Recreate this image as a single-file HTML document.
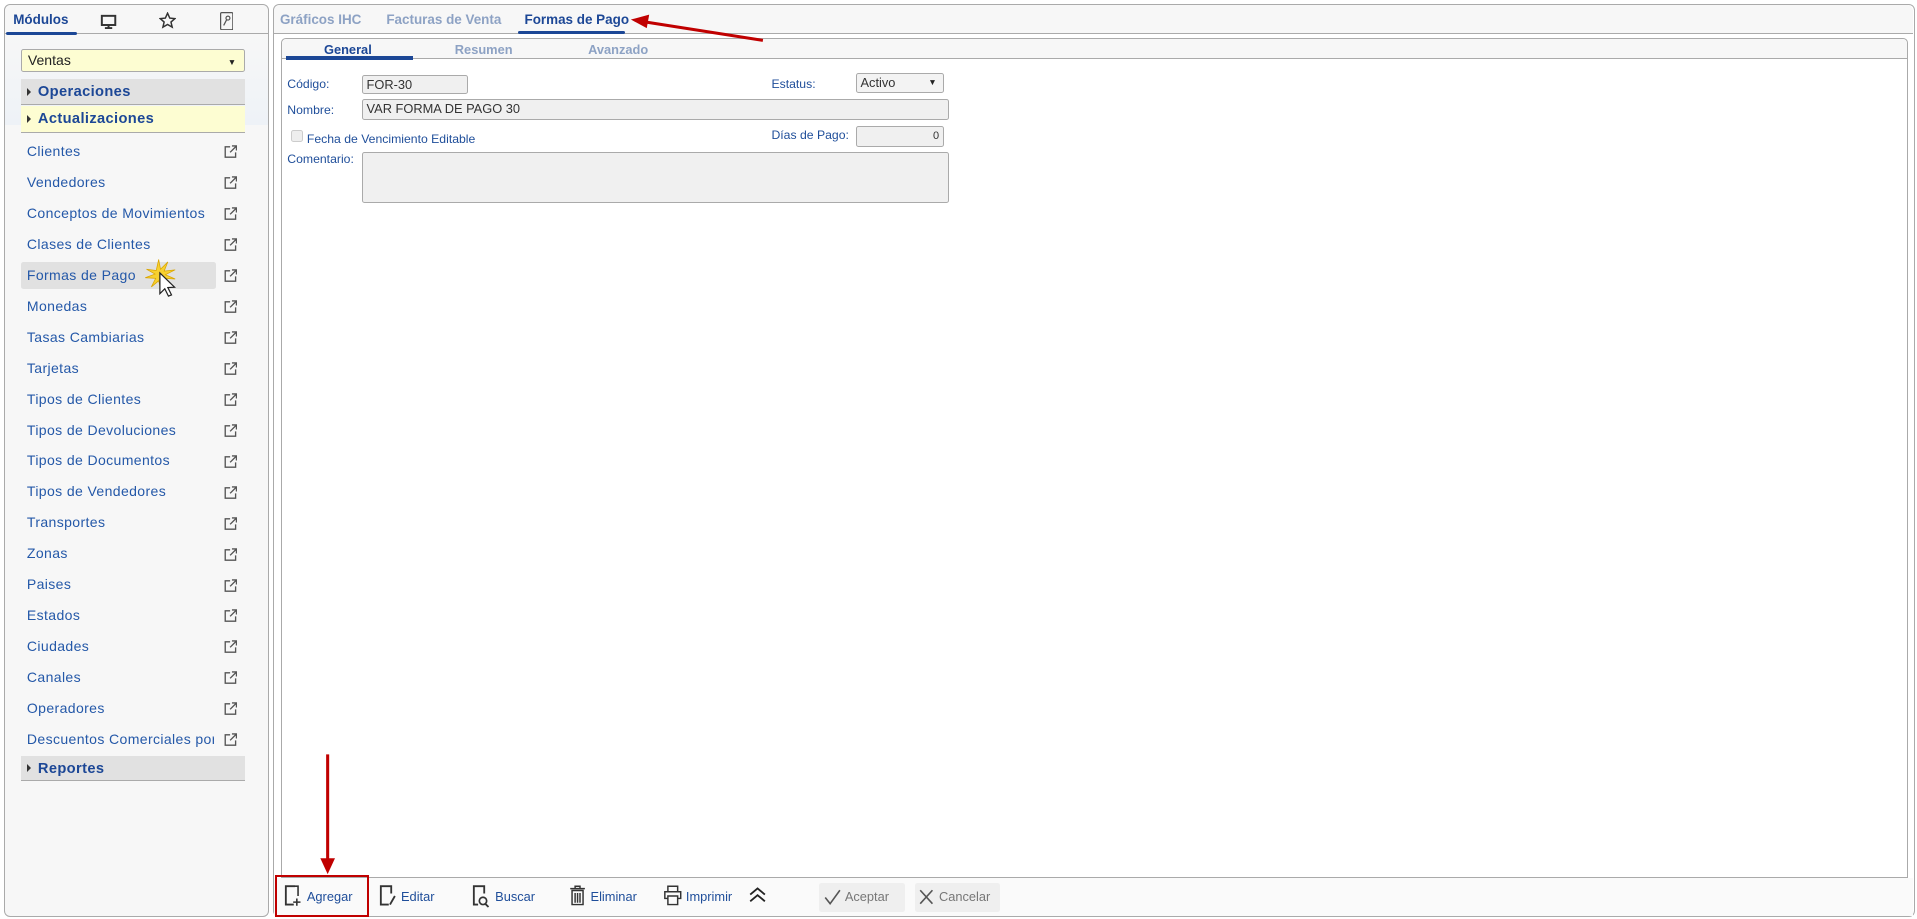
<!DOCTYPE html>
<html><head><meta charset="utf-8">
<style>
*{box-sizing:border-box;margin:0;padding:0}
html,body{width:1917px;height:919px;overflow:hidden;background:#fff}
#w{zoom:1.2226;width:1568px;height:752px;position:relative;font-family:"Liberation Sans",Arial,sans-serif;font-size:11px;color:#1f4e9a}
.a{position:absolute}
.lp{left:3px;top:3px;width:217px;height:747px;border:1px solid #aaa;border-radius:5px;background:#f7f7f7}
.rp{left:223px;top:3px;width:1343px;height:747px;border:1px solid #aaa;border-radius:5px;background:#fff}
.item{position:absolute;left:17px;width:160px;height:22px;line-height:22px;padding-left:5px;font-size:11.5px;letter-spacing:.3px;color:#2458a8}
.ext{position:absolute;left:183px;width:11px;height:11px}
.bar{position:absolute;left:17px;width:183px;height:21px;line-height:22px;font-weight:bold;font-size:12px;color:#1c4796;padding-left:14px;letter-spacing:.3px;border-bottom:1px solid #aaa}
.bar:before{content:"";position:absolute;left:5px;top:7px;border-left:4px solid #333;border-top:3.5px solid transparent;border-bottom:3.5px solid transparent}
.lbl{position:absolute;font-size:10px;color:#1f4e9a}
.inp{position:absolute;background:#f0f0f0;border:1px solid #aaa;border-radius:2px;font-size:10.5px;color:#333;padding-left:3px;line-height:14px}
.tb{position:absolute;top:727px;font-size:10.5px;color:#1f4e9a}
</style></head><body><div id="w">
<div class="a lp">
 <div class="a" style="left:0;top:0;width:215px;height:24px;border-bottom:1px solid #aaa;background:#f7f7f7;border-radius:5px 5px 0 0"></div>
 <div class="a" style="left:7px;top:6px;font-weight:bold;font-size:11px;color:#1c4796">Módulos</div>
 <div class="a" style="left:1px;top:22px;width:58px;height:3px;background:#1c4796;border-radius:2px"></div>
 <svg class="a" style="left:78px;top:8px" width="14" height="13" viewBox="0 0 14 13"><rect x="1.5" y="1.5" width="11" height="7.5" fill="none" stroke="#333" stroke-width="1.6"/><path d="M7 9v2M4 11.5h6" stroke="#333" stroke-width="1.6"/></svg>
 <svg class="a" style="left:126px;top:6px" width="14" height="14" viewBox="0 0 14 14"><path d="M7 1l1.8 4 4.2.4-3.2 2.8 1 4.2L7 10.2 3.2 12.4l1-4.2L1 5.4l4.2-.4z" fill="none" stroke="#333" stroke-width="1.2"/></svg>
 <svg class="a" style="left:176px;top:6px" width="11" height="15" viewBox="0 0 11 15"><rect x=".5" y=".5" width="10" height="14" rx="1" fill="none" stroke="#555"/><circle cx="6.5" cy="5" r="1.6" fill="none" stroke="#555"/><path d="M5.5 6.2L3 11" stroke="#555"/></svg>
</div>
<div class="a" style="left:4px;top:29px;width:215px;height:73px;background:linear-gradient(#f7f7f7,#eef2f7)"></div>
<div class="a" style="left:17px;top:40px;width:183px;height:19px;background:#fdfdd2;border:1px solid #aaa;border-radius:2px;font-size:11.5px;color:#222;line-height:17px;padding-left:5px">Ventas<span style="position:absolute;right:6px;top:2px;font-size:7px">▼</span></div>
<div class="bar" style="top:65px;background:#e1e1e1">Operaciones</div>
<div class="bar" style="top:87px;background:#fdfdd2;height:22px">Actualizaciones</div>
<div class="a" style="left:17px;top:214px;width:160px;height:22px;background:#e1e1e1;border-radius:2px"></div>
<div id="items"></div>
<div class="bar" style="top:618px;background:#e1e1e1;border-bottom:1px solid #aaa">Reportes</div>
<svg class="a" style="left:118px;top:210px" width="34" height="36" viewBox="0 0 34 36"><path d="M12 2l1.5 8 6-6-3 7.5 9-1-8 4 8 3.5-8.5-.5 4 7-6-5-1 8-2-8-6 5 3.5-7L1 17l8-3-7-4 8 1z" fill="#f7d030" stroke="#d9a400" stroke-width=".6"/><path d="M13 13v17l4-4 3 6 2.5-1-3-6 5.5-.3z" fill="#fff" stroke="#222" stroke-width="1"/></svg>

<div class="a rp">
 <div class="a" style="left:0;top:0;width:1341px;height:24px;background:#f7f7f7;border-bottom:1px solid #aaa;border-radius:5px 5px 0 0"></div>
</div>
<div class="a" style="left:229px;top:10px;font-weight:bold;font-size:11px;color:#8da2c4">Gráficos IHC</div>
<div class="a" style="left:316px;top:10px;font-weight:bold;font-size:11px;color:#8da2c4">Facturas de Venta</div>
<div class="a" style="left:429px;top:10px;font-weight:bold;font-size:11px;color:#1c4796">Formas de Pago</div>
<div class="a" style="left:424px;top:25px;width:87px;height:3px;background:#1c4796;border-radius:2px"></div>

<div class="a" style="left:230px;top:31px;width:1331px;height:687px;border:1px solid #aaa;border-radius:4px 4px 0 0;background:#fff"></div>
<div class="a" style="left:231px;top:32px;width:1329px;height:16px;background:#f7f7f7;border-bottom:1px solid #aaa;border-radius:4px 4px 0 0"></div>
<div class="a" style="left:265px;top:34px;font-weight:bold;font-size:10.5px;color:#1c4796">General</div>
<div class="a" style="left:372px;top:34px;font-weight:bold;font-size:10.5px;color:#8da2c4">Resumen</div>
<div class="a" style="left:481px;top:34px;font-weight:bold;font-size:10.5px;color:#8da2c4">Avanzado</div>
<div class="a" style="left:234px;top:46px;width:104px;height:3px;background:#1c4796"></div>

<div class="lbl" style="left:235px;top:63px">Código:</div>
<div class="inp" style="left:296px;top:61px;width:87px;height:16px">FOR-30</div>
<div class="lbl" style="left:631px;top:63px">Estatus:</div>
<div class="inp" style="left:700px;top:60px;width:72px;height:16px;background:#f3f3f3">Activo<span style="position:absolute;right:5px;font-size:7px;color:#222">▼</span></div>
<div class="lbl" style="left:235px;top:84px">Nombre:</div>
<div class="inp" style="left:296px;top:81px;width:480px;height:17px;line-height:15px">VAR FORMA DE PAGO 30</div>
<div class="a" style="left:238px;top:106px;width:10px;height:10px;border:1px solid #ccc;border-radius:2px;background:#eee"></div>
<div class="lbl" style="left:251px;top:108px">Fecha de Vencimiento Editable</div>
<div class="lbl" style="left:631px;top:105px">Días de Pago:</div>
<div class="inp" style="left:700px;top:103px;width:72px;height:17px;text-align:right;padding-right:3px;font-size:9px;line-height:15px">0</div>
<div class="lbl" style="left:235px;top:124px">Comentario:</div>
<div class="inp" style="left:296px;top:124px;width:480px;height:42px"></div>

<div class="a" style="left:224px;top:718px;width:1341px;height:31px;background:#fafafa"></div>
<svg class="a" style="left:232px;top:724px" width="15" height="18" viewBox="0 0 15 18"><path d="M9 1H1.5v15H8" fill="none" stroke="#333" stroke-width="1.5"/><path d="M9 1h2.5v8M10.5 11v6M7.5 14h6" fill="none" stroke="#333" stroke-width="1.3"/></svg>
<div class="tb" style="left:251px">Agregar</div>
<svg class="a" style="left:310px;top:724px" width="14" height="18" viewBox="0 0 14 18"><path d="M8 16H1.5V1H10v6" fill="none" stroke="#333" stroke-width="1.5"/><path d="M13 9l-4 7" stroke="#333" stroke-width="1.5"/></svg>
<div class="tb" style="left:328px">Editar</div>
<svg class="a" style="left:386px;top:724px" width="16" height="19" viewBox="0 0 16 19"><path d="M5 16H1.5V1H10v6" fill="none" stroke="#333" stroke-width="1.5"/><circle cx="9" cy="13" r="3" fill="none" stroke="#333" stroke-width="1.4"/><path d="M11 15.5l2.5 2.5" stroke="#333" stroke-width="1.5"/></svg>
<div class="tb" style="left:405px">Buscar</div>
<svg class="a" style="left:465px;top:724px" width="14" height="17" viewBox="0 0 14 17"><path d="M1 3h12M5 3V1h4v2M2.5 4.5h9V16h-9z M5 6.5v8M7 6.5v8M9 6.5v8" fill="none" stroke="#333" stroke-width="1.2"/></svg>
<div class="tb" style="left:483px">Eliminar</div>
<svg class="a" style="left:542px;top:724px" width="16" height="17" viewBox="0 0 16 17"><path d="M4 5V1h8v4M4 11H1.5V5.5h13V11H12M4 9h8v7H4z" fill="none" stroke="#333" stroke-width="1.2"/></svg>
<div class="tb" style="left:561px">Imprimir</div>
<svg class="a" style="left:613px;top:725px" width="14" height="14" viewBox="0 0 14 14"><path d="M1 7l6-5 6 5M1 12.5l6-5 6 5" fill="none" stroke="#222" stroke-width="1.5"/></svg>
<div class="a" style="left:670px;top:722px;width:70px;height:24px;background:#efefef;border-radius:2px"></div>
<svg class="a" style="left:674px;top:727px" width="14" height="13" viewBox="0 0 14 13"><path d="M1 7l4 5 8-11" fill="none" stroke="#555" stroke-width="1.3"/></svg>
<div class="tb" style="left:691px;color:#777">Aceptar</div>
<div class="a" style="left:748px;top:722px;width:70px;height:24px;background:#efefef;border-radius:2px"></div>
<svg class="a" style="left:752px;top:727px" width="12" height="13" viewBox="0 0 12 13"><path d="M1 1l10 11M11 1L1 12" fill="none" stroke="#555" stroke-width="1.3"/></svg>
<div class="tb" style="left:768px;color:#777">Cancelar</div>
<div class="a" style="left:225px;top:716px;width:77px;height:34px;border:2px solid #c00000"></div>

<svg class="a" style="left:0;top:0" width="1568" height="752">
 <path d="M624 33L528 18" stroke="#c00000" stroke-width="2.5"/><path d="M516 16l15-4-2 11z" fill="#c00000"/>
 <path d="M268 617v86" stroke="#c00000" stroke-width="2.5"/><path d="M262 702h12l-6 13z" fill="#c00000"/>
</svg>
</div>
<script>
var n=["Clientes","Vendedores","Conceptos de Movimientos","Clases de Clientes","Formas de Pago","Monedas","Tasas Cambiarias","Tarjetas","Tipos de Clientes","Tipos de Devoluciones","Tipos de Documentos","Tipos de Vendedores","Transportes","Zonas","Paises","Estados","Ciudades","Canales","Operadores","Descuentos Comerciales por Cliente"];
var h="";
n.forEach(function(t,i){var y=113+i*25.3;
h+='<div class="item" style="top:'+y+'px;overflow:hidden;white-space:nowrap;width:158px">'+t+'</div>';
h+='<svg class="ext" style="top:'+(y+6)+'px" viewBox="0 0 11 11"><path d="M5 1.5H1v8.5h8.5V6M6.5 .8h3.7v3.7M10 1L5 6" fill="none" stroke="#555" stroke-width="1.1"/></svg>';});
document.getElementById("items").outerHTML=h;
</script>
</body></html>
